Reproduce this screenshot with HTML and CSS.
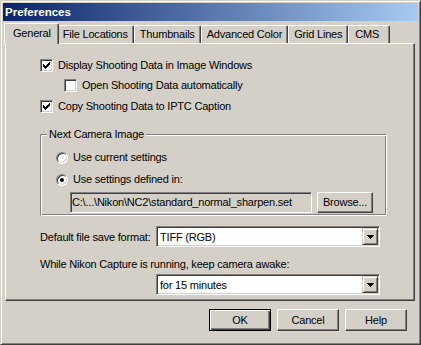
FILE: index.html
```html
<!DOCTYPE html>
<html lang="en">
<head>
    <meta charset="UTF-8">
    <title>Preferences</title>
    <link rel="stylesheet" href="styles.css">
</head>
<body>

    <div class="window">
        <!-- Barra de título -->
        <div class="titlebar">Preferences</div>

        <!-- Abas -->
        <div class="tabs">
            <div class="tab tab-active">General</div>
            <div class="tab">File Locations</div>
            <div class="tab">Thumbnails</div>
            <div class="tab">Advanced Color</div>
            <div class="tab">Grid Lines</div>
            <div class="tab tab-cms">CMS</div>
        </div>

        <!-- Conteúdo da aba General -->
        <div class="panel">
            <div class="option option-first">
                <span class="check"><svg width="11" height="11" viewBox="0 0 11 11"><path d="M2 4h1v1h1v1h1v-1h1v-1h1v-1h1v-1h1v3h-1v1h-1v1h-1v1h-1v1h-1v-1h-1v-1h-1z" fill="#000"/></svg></span>
                Display Shooting Data in Image Windows
            </div>
            <div class="option option-sub">
                <span class="check"></span>
                Open Shooting Data automatically
            </div>
            <div class="option option-third">
                <span class="check"><svg width="11" height="11" viewBox="0 0 11 11"><path d="M2 4h1v1h1v1h1v-1h1v-1h1v-1h1v-1h1v3h-1v1h-1v1h-1v1h-1v1h-1v-1h-1v-1h-1z" fill="#000"/></svg></span>
                Copy Shooting Data to IPTC Caption
            </div>

            <fieldset class="group">
                <legend>Next Camera Image</legend>
                <div class="option radio-first">
                    <span class="radio"></span>
                    Use current settings
                </div>
                <div class="option radio-second">
                    <span class="radio radio-on"></span>
                    Use settings defined in:
                </div>
                <div class="path-row">
                    <div class="path-field">C:\...\Nikon\NC2\standard_normal_sharpen.set</div>
                    <div class="button browse">Browse...</div>
                </div>
            </fieldset>

            <div class="field-row">
                <span class="field-label">Default file save format:</span>
                <div class="select">
                    TIFF (RGB)
                    <span class="select-arrow"><svg width="7" height="4" viewBox="0 0 7 4"><path d="M0 0h7v1h-1v1h-1v1h-1v1h-1v-1h-1v-1h-1v-1h-1z" fill="#000"/></svg></span>
                </div>
            </div>

            <div class="note">While Nikon Capture is running, keep camera awake:</div>
            <div class="select select-indent">
                for 15 minutes
                <span class="select-arrow"><svg width="7" height="4" viewBox="0 0 7 4"><path d="M0 0h7v1h-1v1h-1v1h-1v1h-1v-1h-1v-1h-1v-1h-1z" fill="#000"/></svg></span>
            </div>
        </div>

        <!-- Botões -->
        <div class="actions">
            <div class="button button-default">OK</div>
            <div class="button">Cancel</div>
            <div class="button">Help</div>
        </div>
    </div>

</body>
</html>
```

FILE: styles.css
```css
* {
    box-sizing: border-box;
    margin: 0;
    padding: 0;
}

body {
    font-family: "Liberation Sans", Arial, sans-serif;
    font-size: 11px;
    letter-spacing: -0.2px;
    color: #000;
    background-color: #d4d0c8;
}

/* Janela */
.window {
    width: 421px;
    height: 345px;
    padding: 2px;
    background-color: #d4d0c8;
    border: 1px solid;
    border-color: #d4d0c8 #404040 #404040 #d4d0c8;
    box-shadow: inset 1px 1px #fff, inset -1px -1px #808080;
}

.titlebar {
    height: 18px;
    line-height: 18px;
    padding-left: 2px;
    color: #fff;
    font-size: 11.5px;
    font-weight: bold;
    letter-spacing: 0;
    background: linear-gradient(to right, #0a246a, #a6caf0);
}

/* Abas */
.tabs {
    display: flex;
    align-items: flex-end;
    height: 20px;
    margin-top: 2px;
    padding-left: 3px;
}

.tab {
    height: 18px;
    line-height: 16px;
    padding: 0 5px;
    text-align: center;
    white-space: nowrap;
    background-color: #d4d0c8;
    border-top: 1px solid #fff;
    border-left: 1px solid #fff;
    border-right: 1px solid #404040;
    border-radius: 2px 2px 0 0;
    box-shadow: inset -1px 0 #808080;
}

.tab-active {
    position: relative;
    z-index: 1;
    height: 21px;
    line-height: 18px;
    margin: 0 -2px -1px -2px;
    padding: 0 7px 0 8px;
}

.tab-cms {
    min-width: 42px;
    text-align: left;
    padding-left: 6px;
}

/* Painel */
.panel {
    height: 258px;
    margin: 0 3px 0 2px;
    padding-left: 34px;
    border: 1px solid;
    border-color: #fff #404040 #404040 #fff;
    box-shadow: inset -1px -1px #808080;
}

.option {
    display: flex;
    align-items: center;
    gap: 5px;
    height: 13px;
    line-height: 13px;
    white-space: nowrap;
}

.option-first {
    margin-top: 15px;
}

.option-sub {
    margin-top: 7px;
    margin-left: 24px;
}

.option-third {
    margin-top: 8px;
}

.check {
    display: block;
    flex: none;
    width: 13px;
    height: 13px;
    background-color: #fff;
    border: 1px solid;
    border-color: #808080 #fff #fff #808080;
    box-shadow: inset 1px 1px #404040, inset -1px -1px #d4d0c8;
}

.check svg {
    display: block;
}

.radio {
    position: relative;
    flex: none;
    width: 12px;
    height: 12px;
    border-radius: 50%;
    background-color: #fff;
    border: 1px solid;
    border-color: #808080 #fff #fff #808080;
    box-shadow: inset 1px 1px #404040, inset -1px -1px #d4d0c8;
}

.radio-on::after {
    content: "";
    position: absolute;
    left: 3px;
    top: 3px;
    width: 4px;
    height: 4px;
    border-radius: 50%;
    background-color: #000;
}

/* Grupo "Next Camera Image" */
.group {
    width: 347px;
    margin-top: 15px;
    padding: 0 0 2px 15px;
    min-width: 0;
    border: 1px solid;
    border-color: #808080 #fff #fff #808080;
    box-shadow: inset 1px 1px #fff, inset -1px -1px #808080;
}

.group legend {
    margin-left: -9px;
    padding: 0 2px;
    line-height: 13px;
    background-color: #d4d0c8;
}

.radio-first {
    margin-top: 10px;
}

.radio-second {
    margin-top: 9px;
}

.path-row {
    display: flex;
    gap: 5px;
    margin-top: 6px;
    margin-left: 14px;
}

.path-field {
    width: 242px;
    height: 21px;
    line-height: 19px;
    padding-left: 1px;
    white-space: nowrap;
    overflow: hidden;
    border: 1px solid;
    border-color: #808080 #fff #fff #808080;
    box-shadow: inset 1px 1px #404040, inset -1px -1px #d4d0c8;
}

/* Botões */
.button {
    width: 62px;
    height: 22px;
    line-height: 20px;
    text-align: center;
    background-color: #d4d0c8;
    border: 1px solid;
    border-color: #fff #404040 #404040 #fff;
    box-shadow: inset -1px -1px #808080;
}

.browse {
    width: 56px;
    height: 21px;
    line-height: 19px;
}

.button-default {
    border-color: #000;
    box-shadow: inset 1px 1px #fff, inset -1px -1px #404040, inset -2px -2px #808080;
}

/* Campos de seleção */
.field-row {
    display: flex;
    align-items: center;
    margin-top: 10px;
}

.field-label {
    width: 116px;
    white-space: nowrap;
}

.select {
    display: flex;
    align-items: center;
    width: 224px;
    height: 21px;
    padding-left: 3px;
    background-color: #fff;
    white-space: nowrap;
    border: 1px solid;
    border-color: #808080 #fff #fff #808080;
    box-shadow: inset 1px 1px #404040, inset -1px -1px #d4d0c8;
}

.select-arrow {
    display: flex;
    align-items: center;
    justify-content: center;
    width: 16px;
    height: 17px;
    margin-left: auto;
    margin-right: 1px;
    background-color: #d4d0c8;
    border: 1px solid;
    border-color: #d4d0c8 #404040 #404040 #d4d0c8;
    box-shadow: inset 1px 1px #fff, inset -1px -1px #808080;
}

.select-arrow svg {
    display: block;
}

.note {
    margin-top: 11px;
    line-height: 13px;
    white-space: nowrap;
}

.select-indent {
    margin-top: 3px;
    margin-left: 116px;
}

.actions {
    display: flex;
    justify-content: flex-end;
    gap: 6px;
    margin-top: 8px;
    padding-right: 11px;
}
```
